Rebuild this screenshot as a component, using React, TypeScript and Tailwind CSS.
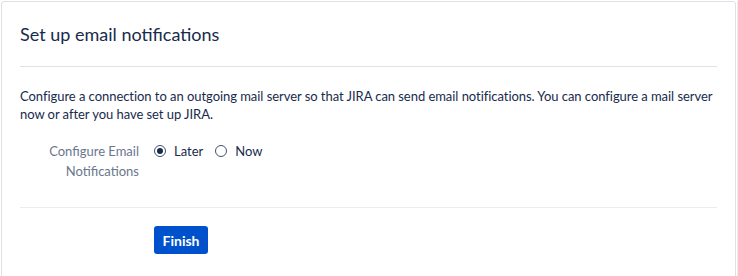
import React, { useState } from 'react';

export default function App() {
  const [mode, setMode] = useState<'later' | 'now'>('later');

  return (
    <div className="flex h-[276px] w-[738px] overflow-hidden bg-white pl-px pt-px font-['Lato','Liberation_Sans',sans-serif] text-[#172b4d]">
      <div className="h-[290px] w-[735px] shrink-0 rounded-[3px] border border-[#dfe1e6] bg-white px-[18px]">
        <h2 className="pt-[20px] text-[18px] leading-[24px] text-[#172b4d]">Set up email notifications</h2>
        <div className="mt-[20px] border-t border-[#dfe1e6]" />

        <p className="mt-[20px] whitespace-nowrap text-[13px] leading-[18px] tracking-[-0.05px]">
          Configure a connection to an outgoing mail server so that JIRA can send email notifications. You can configure a mail server
          <br />
          now or after you have set up JIRA.
        </p>

        <div className="mt-[18px] flex items-start">
          <label className="w-[119px] text-right text-[13px] leading-[20px] text-[#6b778c]">
            Configure Email
            <br />
            Notifications
          </label>
          <div className="ml-[15px] flex items-center text-[13px] leading-[20px]">
            <Radio checked={mode === 'later'} onClick={() => setMode('later')} label="Later" />
            <span className="w-[12px]" />
            <Radio checked={mode === 'now'} onClick={() => setMode('now')} label="Now" />
          </div>
        </div>

        <div className="mt-[26px] border-t border-[#ebecf0]" />

        <div className="mt-[18px] pl-[134px]">
          <button className="h-[28px] w-[54px] rounded-[3px] bg-[#0052cc] text-[14px] font-bold text-white">
            Finish
          </button>
        </div>
      </div>
      <div className="ml-px w-[2px] bg-[#ebecf0]" />
    </div>
  );
}

function Radio({ checked, onClick, label }: { checked: boolean; onClick: () => void; label: string }) {
  return (
    <button type="button" onClick={onClick} className="flex items-center gap-[8px]">
      <span className="flex h-[12px] w-[12px] items-center justify-center rounded-full border border-[#42526e] bg-white">
        {checked && <span className="h-[6px] w-[6px] rounded-full bg-[#172b4d]" />}
      </span>
      <span>{label}</span>
    </button>
  );
}
